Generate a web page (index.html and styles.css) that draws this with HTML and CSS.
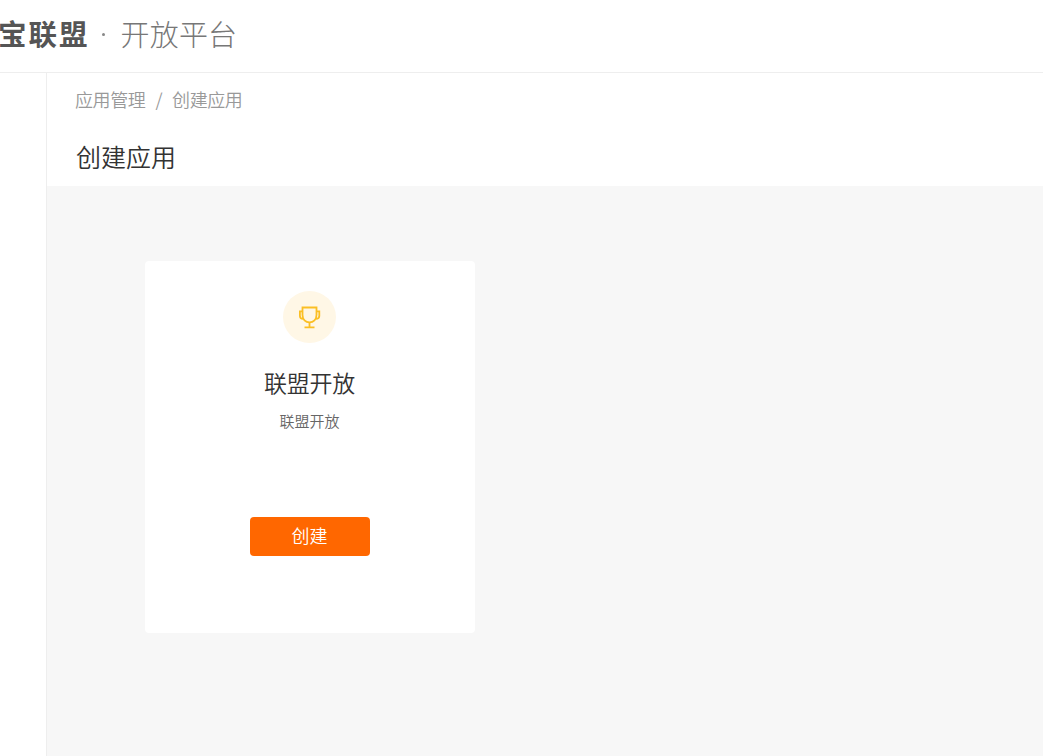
FILE: index.html
```html
<!DOCTYPE html>
<html lang="zh-CN">
<head>
    <meta charset="UTF-8">
    <meta name="viewport" content="width=device-width, initial-scale=1.0">
    <title>创建应用</title>
    <link rel="stylesheet" href="styles.css">
</head>
<body>
    <header class="header">
        <span class="logo">宝联盟</span>
        <span class="logo-dot"></span>
        <span class="platform">开放平台</span>
    </header>

    <div class="layout">
        <aside class="sidebar"></aside>

        <main class="main">
            <div class="page-head">
                <nav class="breadcrumb">
                    <a href="#">应用管理</a>
                    <span class="separator">/</span>
                    <span class="current">创建应用</span>
                </nav>
                <h1>创建应用</h1>
            </div>

            <div class="content">
                <div class="card">
                    <div class="card-icon">
                        <svg width="22" height="24" viewBox="0 0 22 24" fill="none" stroke="#fbbf24" stroke-width="1.8">
                            <path d="M3.5 2.5H17.5V10C17.5 14.3 14.5 17.4 10.5 17.4S3.5 14.3 3.5 10Z"/>
                            <path d="M3.5 6.3H.9V11C.9 12.8 2.2 13.8 4.1 13.8M17.5 6.3H20.3V11C20.3 12.8 19 13.8 16.9 13.8"/>
                            <path d="M10.5 17.4V22.4M5.5 22.4H15.5"/>
                        </svg>
                    </div>
                    <h2>联盟开放</h2>
                    <p>联盟开放</p>
                    <button class="create-btn">创建</button>
                </div>
            </div>
        </main>
    </div>
</body>
</html>
```

FILE: styles.css
```css
* {
    box-sizing: border-box;
}

body {
    margin: 0;
    font-family: "Noto Sans CJK SC", sans-serif;
    font-weight: 350;
    color: #333;
    background-color: #fff;
}

h1, h2, p {
    margin: 0;
    font-weight: inherit;
}

.header {
    display: flex;
    align-items: center;
    height: 73px;
    padding-bottom: 7px;
    border-bottom: 1px solid #eee;
    white-space: nowrap;
}

.logo {
    margin-left: -2px;
    font-size: 28.5px;
    font-weight: 700;
    letter-spacing: 2px;
    color: #555;
}

.logo-dot {
    width: 3px;
    height: 3px;
    margin: 4px 16px 0 12px;
    border-radius: 50%;
    background-color: #888;
}

.platform {
    font-size: 29px;
    font-weight: 300;
    letter-spacing: 0.2px;
    color: #777;
}

.layout {
    display: flex;
    height: calc(100vh - 73px);
}

.sidebar {
    width: 47px;
    border-right: 1px solid #eee;
}

.main {
    display: flex;
    flex: 1;
    flex-direction: column;
}

.page-head {
    height: 113px;
    padding: 12px 28px 0;
}

.breadcrumb {
    display: flex;
    font-size: 18px;
    line-height: 28px;
    letter-spacing: -0.4px;
    color: #999;
}

.breadcrumb a {
    color: inherit;
    text-decoration: none;
}

.separator {
    margin: 0 10px;
}

.page-head h1 {
    margin: 25px 0 0 1px;
    font-size: 25px;
    line-height: 36px;
}

.content {
    flex: 1;
    padding: 75px 98px;
    background-color: #f7f7f7;
}

.card {
    display: flex;
    flex-direction: column;
    align-items: center;
    width: 330px;
    height: 372px;
    padding: 30px 1px 0 0;
    border-radius: 4px;
    background-color: #fff;
}

.card-icon {
    display: flex;
    align-items: center;
    justify-content: center;
    width: 53px;
    height: 52px;
    border-radius: 50%;
    background-color: #fff7e6;
}

.card h2 {
    margin-top: 22px;
    font-size: 23px;
    line-height: 34px;
    letter-spacing: -0.2px;
}

.card p {
    margin-top: 10px;
    font-size: 15px;
    line-height: 24px;
    color: #666;
}

.create-btn {
    width: 120px;
    height: 39px;
    margin: 84px 0 0 1px;
    padding: 0 1px 4px 0;
    border: none;
    border-radius: 4px;
    font-family: inherit;
    font-size: 18px;
    font-weight: inherit;
    color: #fff;
    background-color: #ff6700;
    cursor: pointer;
}
```
